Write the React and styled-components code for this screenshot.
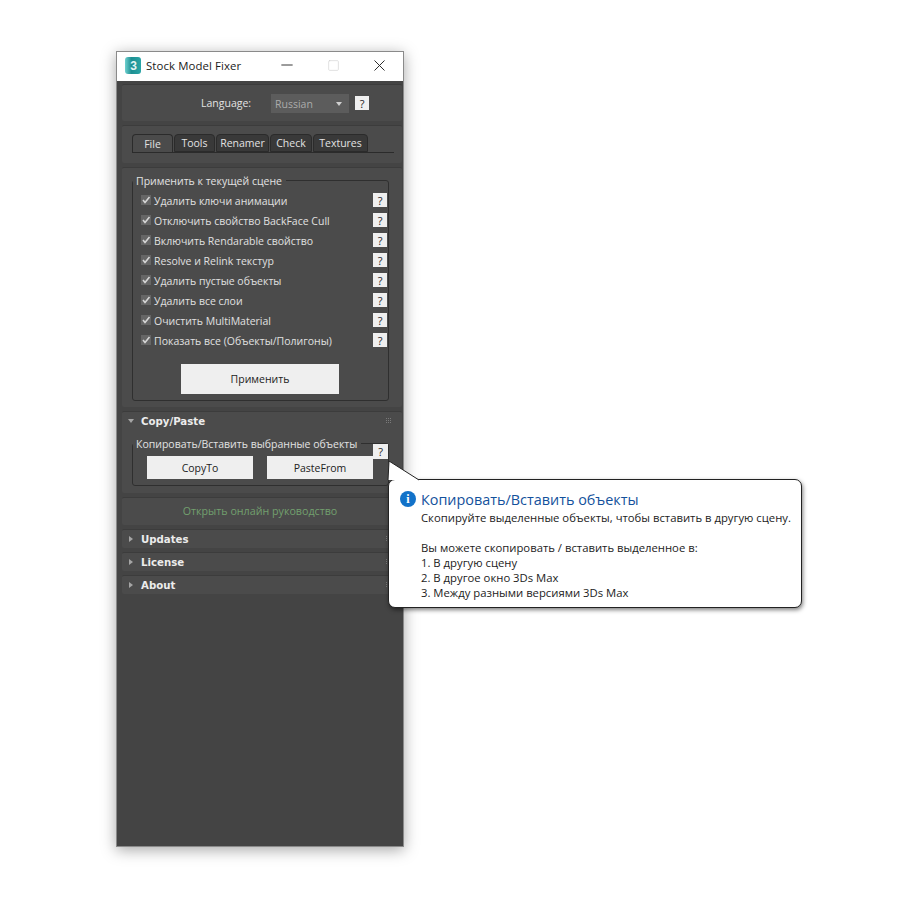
import React from 'react';
import styled, { createGlobalStyle } from 'styled-components';
import { FiMinus, FiSquare, FiX } from 'react-icons/fi';

const Global = createGlobalStyle`
  html, body { margin: 0; background: #fff; }
  body { font-family: "Open Sans", "Liberation Sans", sans-serif; }
`;

const Page = styled.div`
  width: 897px;
  height: 897px;
  box-sizing: border-box;
  padding: 51px 0 0 116px;
  position: relative;
  overflow: hidden;
`;

const Window = styled.div`
  width: 288px;
  height: 796px;
  background: #444444;
  box-shadow: 0 3px 14px rgba(0, 0, 0, 0.35);
  outline: 1px solid #8a8a8a;
  outline-offset: -1px;
  display: flex;
  flex-direction: column;
`;

const TitleBar = styled.div`
  height: 30px;
  flex: none;
  background: #fff;
  display: flex;
  align-items: center;
  padding: 0 2px 2px 9px;
  box-sizing: border-box;
`;

const TitleText = styled.span`
  font-size: 11.4px;
  color: #1a1a1a;
  margin-left: 5px;
  flex: 1;
  letter-spacing: 0.1px;
`;

const WinButton = styled.div`
  width: 46px;
  height: 28px;
  display: flex;
  align-items: center;
  justify-content: center;
  color: ${p => p.$off ? '#c9c9c9' : '#222'};
`;

const Body = styled.div`
  padding: 3px 2px 0 6px;
  display: flex;
  flex-direction: column;
  gap: 4px;
`;

const Panel = styled.div`
  height: ${p => p.$h}px;
  box-sizing: border-box;
  background: #4b4b4b;
  border-top: 1px solid #3c3c3c;
  border-radius: 2px;
  position: relative;
  flex: none;
`;

const LanguageRow = styled(Panel)`
  display: flex;
  align-items: center;
  padding: 0 0 0 79px;
`;

const Label = styled.span`
  font-size: 10.5px;
  color: #e2e2e2;
  width: 70px;
`;

const Select = styled.div`
  width: 78px;
  height: 19px;
  background: #5c5c5c;
  color: #ababab;
  font-size: 10.5px;
  display: flex;
  align-items: center;
  justify-content: space-between;
  padding: 1px 7px 0 4px;
  box-sizing: border-box;
  margin-right: 6px;
`;

const Caret = styled.span`
  width: 0;
  height: 0;
  border-left: 3px solid transparent;
  border-right: 3px solid transparent;
  border-top: 4px solid #cfcfcf;
`;

const Help = styled.div`
  width: 14px;
  height: 14px;
  background: #efefef;
  color: #222;
  font-size: 11px;
  display: flex;
  align-items: center;
  justify-content: center;
  flex: none;
`;

const TabsPanel = styled(Panel)`
  padding: 8px 8px 0 10px;
`;

const TabStrip = styled.div`
  display: flex;
  gap: 1px;
  height: 19px;
  box-sizing: border-box;
  border-bottom: 1px solid #2b2b2b;
`;

const Tab = styled.div`
  width: ${p => p.$w}px;
  height: 18px;
  box-sizing: border-box;
  border-radius: 4px 4px 0 0;
  background: ${p => p.$active ? '#4b4b4b' : '#393939'};
  border: 1px solid #2b2b2b;
  border-bottom: ${p => p.$active ? 'none' : '1px solid #2b2b2b'};
  color: #e2e2e2;
  font-size: 10.5px;
  display: flex;
  align-items: center;
  justify-content: center;
`;

const Group = styled.fieldset`
  min-width: 0;
  padding: 0;
  border: 1px solid #2f2f2f;
  border-radius: 3px;
  box-sizing: border-box;
  height: ${p => p.$h}px;
  margin: ${p => p.$top}px 13px 0 10px;
`;

const Legend = styled.legend`
  font-size: 10.5px;
  line-height: 14px;
  color: #e2e2e2;
  padding: 2px 4px 0 3px;
`;

const FixList = styled.div`
  display: flex;
  flex-direction: column;
  padding: 2px 1px 0 8px;
`;

const FixRow = styled.div`
  height: 20px;
  display: flex;
  align-items: center;
`;

const Check = styled.div`
  width: 10px;
  height: 10px;
  background: #666666;
  margin-right: 3px;
  flex: none;
  display: flex;
  align-items: center;
  justify-content: center;
`;

const FixLabel = styled.span`
  flex: 1;
  font-size: 10.5px;
  color: #e0e0e0;
  padding-top: 2px;
`;

const ApplyWrap = styled.div`
  display: flex;
  justify-content: center;
  padding: 14px 1px 0 0;
`;

const Button = styled.div`
  width: ${p => p.$w}px;
  height: ${p => p.$h}px;
  background: #efefef;
  color: #222;
  font-size: 10.5px;
  display: flex;
  align-items: center;
  justify-content: center;
`;

const RolloutHead = styled.div`
  height: 18px;
  display: flex;
  align-items: center;
  padding: 0 10px 0 6px;
  font-size: 10.2px;
  font-weight: 700;
  color: #ececec;
  font-family: "DejaVu Sans", "Open Sans", sans-serif;
`;

const Arrow = styled.span`
  width: 0;
  height: 0;
  flex: none;
  margin-right: ${p => p.$open ? 7 : 8}px;
  ${p => p.$open
    ? 'border-left: 3px solid transparent; border-right: 3px solid transparent; border-top: 4px solid #a5a5a5;'
    : 'border-top: 3px solid transparent; border-bottom: 3px solid transparent; border-left: 4px solid #a5a5a5; margin-left: 1px;'}
`;

const Grip = styled.span`
  margin-left: auto;
  width: 6px;
  height: 6px;
  background-image: radial-gradient(circle at 0.5px 0.5px, #7a7a7a 0.7px, transparent 0.8px);
  background-size: 2px 2px;
`;

const CopyRow = styled.div`
  display: flex;
  justify-content: space-between;
  padding: 5px 15px 0 14px;
`;

const GuidePanel = styled(Panel)`
  display: flex;
  align-items: center;
  justify-content: center;
  font-size: 10.7px;
  color: #72a06e;
  padding: 0 4px 2px 0;
`;

const CopyHelp = styled(Help)`
  position: absolute;
  left: 373px;
  top: 444px;
  height: 15px;
  width: 15px;
`;

const Tail = styled.svg`
  position: absolute;
  left: 386px;
  top: 459px;
  width: 40px;
  height: 24px;
  z-index: 2;
`;

const Callout = styled.div`
  position: absolute;
  left: 388px;
  top: 479px;
  width: 414px;
  height: 129px;
  box-sizing: border-box;
  background: #fff;
  border: 1px solid #222;
  border-radius: 7px;
  box-shadow: 1px 2px 4px rgba(0, 0, 0, 0.5);
  padding: 10px 8px 0 11px;
  font-family: "Open Sans", "Noto Sans", sans-serif;
`;

const CalloutHead = styled.div`
  display: flex;
  align-items: center;
  gap: 5px;
  height: 18px;
  font-size: 14.4px;
  color: #13519c;
`;

const InfoDot = styled.span`
  width: 16px;
  height: 16px;
  border-radius: 50%;
  background: #1272c9;
  color: #fff;
  font-size: 12px;
  font-weight: 700;
  font-family: "Liberation Serif", serif;
  display: flex;
  align-items: center;
  justify-content: center;
`;

const CalloutText = styled.div`
  margin: 2px 0 0 21px;
  font-size: 11.3px;
  line-height: 15px;
  color: #1c1c1c;
  white-space: pre-line;
`;

const fixes = [
  'Удалить ключи анимации',
  'Отключить свойство BackFace Cull',
  'Включить Rendarable свойство',
  'Resolve и Relink текстур',
  'Удалить пустые объекты',
  'Удалить все слои',
  'Очистить MultiMaterial',
  'Показать все (Объекты/Полигоны)',
];

const tabs = [['File', 41], ['Tools', 41], ['Renamer', 53], ['Check', 42], ['Textures', 55]];

const CheckMark = () => (
  <svg width="10" height="10" viewBox="0 0 10 10">
    <path d="M2 5 L4 7.5 L8.5 2" fill="none" stroke="#d6d6d6" strokeWidth="1.6" />
  </svg>
);

const MaxLogo = () => (
  <svg width="16" height="17" viewBox="0 0 16 17">
    <defs>
      <linearGradient id="maxlogo" x1="0" x2="1" y1="0" y2="0">
        <stop offset="0" stopColor="#6fd0cf" />
        <stop offset="0.4" stopColor="#1d8f92" />
        <stop offset="1" stopColor="#2aa5a6" />
      </linearGradient>
    </defs>
    <rect x="0" y="0" width="16" height="17" rx="3" fill="url(#maxlogo)" />
    <text x="8.5" y="13" textAnchor="middle" fontSize="12" fontWeight="700" fill="#e3f5f4" fontFamily="Liberation Sans, sans-serif">3</text>
  </svg>
);

export default function App() {
  return (
    <Page>
      <Global />
      <Window>
        <TitleBar>
          <MaxLogo />
          <TitleText>Stock Model Fixer</TitleText>
          <WinButton><FiMinus size={18} strokeWidth={1.2} /></WinButton>
          <WinButton $off><FiSquare size={13} strokeWidth={1} /></WinButton>
          <WinButton><FiX size={19} strokeWidth={1.2} /></WinButton>
        </TitleBar>
        <Body>
          <LanguageRow $h={37}>
            <Label>Language:</Label>
            <Select>Russian<Caret /></Select>
            <Help>?</Help>
          </LanguageRow>
          <TabsPanel $h={38}>
            <TabStrip>
              {tabs.map(([name, w], i) => <Tab key={name} $w={w} $active={i === 0}>{name}</Tab>)}
            </TabStrip>
          </TabsPanel>
          <Panel $h={240}>
            <Group $h={229} $top={4}>
              <Legend>Применить к текущей сцене</Legend>
              <FixList>
                {fixes.map(text => (
                  <FixRow key={text}>
                    <Check><CheckMark /></Check>
                    <FixLabel>{text}</FixLabel>
                    <Help>?</Help>
                  </FixRow>
                ))}
              </FixList>
              <ApplyWrap><Button $w={158} $h={30}>Применить</Button></ApplyWrap>
            </Group>
          </Panel>
          <Panel $h={82}>
            <RolloutHead><Arrow $open />Copy/Paste<Grip /></RolloutHead>
            <Group $h={51} $top={5}>
              <Legend>Копировать/Вставить выбранные объекты</Legend>
              <CopyRow>
                <Button $w={106} $h={23}>CopyTo</Button>
                <Button $w={106} $h={23}>PasteFrom</Button>
              </CopyRow>
            </Group>
          </Panel>
          <GuidePanel $h={28}>Открыть онлайн руководство</GuidePanel>
          {['Updates', 'License', 'About'].map(name => (
            <Panel key={name} $h={19}>
              <RolloutHead><Arrow />{name}<Grip /></RolloutHead>
            </Panel>
          ))}
        </Body>
      </Window>
      <CopyHelp>?</CopyHelp>
      <Tail viewBox="0 0 40 24">
        <path d="M3 2 L2 21 L33 21 Z" fill="#fff" />
        <path d="M2 21 L3 2 L33 21" fill="none" stroke="#222" strokeWidth="1" />
      </Tail>
      <Callout>
        <CalloutHead><InfoDot>i</InfoDot>Копировать/Вставить объекты</CalloutHead>
        <CalloutText>{`Скопируйте выделенные объекты, чтобы вставить в другую сцену.

Вы можете скопировать / вставить выделенное в:
1. В другую сцену
2. В другое окно 3Ds Max
3. Между разными версиями 3Ds Max`}</CalloutText>
      </Callout>
    </Page>
  );
}
